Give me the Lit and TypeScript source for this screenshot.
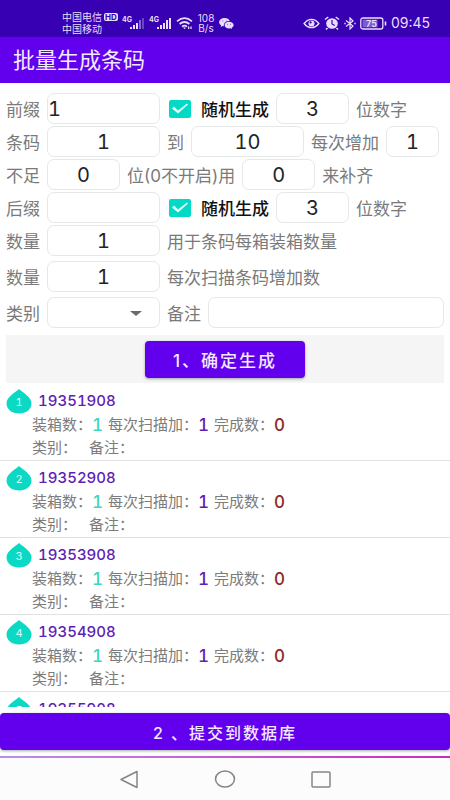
import { LitElement, html, css } from "lit";
import { customElement, property } from "lit/decorators.js";

const FONT = css`Inter, "Noto Sans CJK SC", sans-serif`;

@customElement("status-bar")
class StatusBar extends LitElement {
  static styles = css`
    :host { display: flex; justify-content: space-between; height: 37px; padding: 9px 20px 0 62px; box-sizing: border-box;
      background: #3700b3; color: #e9defa; font-family: ${FONT}; }
    .group { display: flex; align-items: center; gap: 4px; }
    .carrier { font-size: 10px; line-height: 12px; }
    .line { display: flex; align-items: center; gap: 2px; }
    .hd { font-size: 8px; line-height: 8px; font-weight: 700; color: #3700b3; background: #e9defa; border-radius: 2px; padding: 0 1px; }
    .rate { font-size: 10px; line-height: 10px; text-align: center; padding: 0 1px; }
    .time { font-size: 14px; line-height: 16px; }
    svg { display: block; }
  `;
  signal(weak: boolean) {
    return html`<svg width="23" height="18" viewBox="0 0 23 18" fill="#e9defa">
      <text x="0" y="8" font-size="7" font-weight="700">4G</text>
      <rect x="8" y="13" width="2" height="2" /><rect x="11" y="11" width="2" height="4" />
      <rect x="14" y="9" width="2" height="6" />
      <rect x="17" y="6" width="2" height="9" opacity=${weak ? 0.45 : 1} />
      <rect x="20" y="4" width="2" height="11" opacity=${weak ? 0.3 : 1} /></svg>`;
  }
  render() {
    return html`
      <div class="group">
        <div class="carrier">
          <div class="line">中国电信<span class="hd">HD</span></div>
          <div class="line">中国移动</div>
        </div>
        ${this.signal(true)}${this.signal(false)}
        <svg width="17" height="13" viewBox="0 0 17 13" fill="none" stroke="#e9defa" stroke-width="1.7">
          <path d="M1 4.300Q8.500-2 16 4.300M3.600 7Q8.500 3 13.400 7M6 9.600Q8.500 7.600 11 9.600" />
          <path d="M7 10.500h3l-1.500 1.800z" fill="#e9defa" stroke="none" />
          <path d="M12.600 12V9.500M15 9.500V12" stroke-width="1.300" />
        </svg>
        <div class="rate">108<br />B/s</div>
        <svg width="15" height="11" viewBox="0 0 16 12" fill="#e9defa">
          <path d="M6 0C2.700 0 0 2 0 4.500C0 6 .8 7.200 2.100 8L1.700 9.700L3.800 8.700L5.200 8.900C4.500 5.500 7.500 3 11.500 3.200C10.900 1.300 8.700 0 6 0Z" />
          <path d="M10.800 4C7.900 4 5.900 5.700 5.900 7.700C5.900 10 8.300 11.500 10.800 11.400L12.300 11.200L14 12L13.700 10.600C15 9.900 15.800 8.900 15.800 7.700C15.800 5.700 13.500 4 10.800 4Z" />
          <g fill="#3700b3"><circle cx="4" cy="3.200" r=".5" /><circle cx="7.600" cy="3.200" r=".5" /><circle cx="9.300" cy="6.800" r=".5" /><circle cx="12.500" cy="6.800" r=".5" /></g>
        </svg>
      </div>
      <div class="group">
        <svg width="17" height="11" viewBox="0 0 18 12" fill="none" stroke="#e9defa">
          <path d="M1 6Q4.500 1.500 9 1.500T17 6Q13.500 10.500 9 10.500T1 6Z" stroke-width="1.600" />
          <circle cx="9" cy="6" r="3.300" fill="#e9defa" stroke="none" /><circle cx="8" cy="4.800" r="1.200" fill="#3700b3" stroke="none" />
        </svg>
        <svg width="16" height="14" viewBox="0 0 16 14">
          <ellipse cx="8" cy="7.500" rx="5.800" ry="5.300" fill="#e9defa" />
          <path d="M1 3.500L4.300 1M15 3.500L11.700 1M3.500 12L2 13.500M12.500 12L14 13.500" stroke="#e9defa" stroke-width="1.500" />
          <path d="M8 4V8L10.800 9.500" fill="none" stroke="#3700b3" stroke-width="1.200" />
        </svg>
        <svg width="12" height="13" viewBox="0 0 12 13" fill="none" stroke="#e9defa" stroke-width="1.200">
          <path d="M2 3.500L9 9L6 12V1L9 4L2 9.500" /><path d="M.3 6.500h1.400M10.300 6.500h1.400" stroke-width="1.600" />
        </svg>
        <svg width="27" height="13" viewBox="0 0 27 13">
          <rect x=".8" y="1" width="22" height="11" rx="2" fill="none" stroke="#e9defa" stroke-width="1.300" />
          <rect x="2.500" y="2.600" width="15" height="7.800" fill="#7d5bd0" />
          <path d="M25.500 4.500v4" stroke="#e9defa" stroke-width="1.600" />
          <text x="11.500" y="10" font-size="9" font-weight="600" text-anchor="middle" fill="#e9defa">75</text>
        </svg>
        <div class="time">09:45</div>
      </div>`;
  }
}

@customElement("code-item")
class CodeItem extends LitElement {
  @property({ type: Number }) index = 1;
  @property() code = "";
  static styles = css`
    :host { display: block; padding: 5px 6px 0; height: 77px; box-sizing: border-box; border-bottom: 1px solid #e2e2e2;
      font-family: ${FONT}; color: #7c7c7c; font-size: 15px; font-variant-numeric: tabular-nums; }
    .head { display: flex; gap: 6px; height: 25px; }
    .drop { display: grid; width: 26px; height: 25px; }
    .drop > * { grid-area: 1 / 1; }
    .num { place-self: center; padding-top: 1px; font-size: 11px; line-height: 12px; color: #d8fff8; }
    .code { line-height: 23px; font-weight: 500; color: #5f1fb4; }
    .line { display: flex; align-items: center; padding-left: 26px; line-height: 22px; }
    .line b { font-size: 17px; font-weight: 500; margin-right: 5px; }
    .teal { color: #3dd6c3; }
    .purple { color: #5f1fb4; }
    .red { color: #8e2a20; }
    .second { gap: 12px; padding-top: 1px; }
  `;
  render() {
    return html`
      <div class="head">
        <div class="drop">
          <svg width="26" height="25" viewBox="0 0 26 25"><path fill="#0cd9c4" d="M13 0C15 2.500 25.500 7.500 25.500 14.200C25.500 20.300 20 24.500 13 24.500S.5 20.300.5 14.200C.5 7.500 11 2.500 13 0Z" /></svg>
          <span class="num">${this.index}</span>
        </div>
        <span class="code">${this.code}</span>
      </div>
      <div class="line">
        <span>装箱数：</span><b class="teal">1</b><span>每次扫描加：</span><b class="purple">1</b><span>完成数：</span><b class="red">0</b>
      </div>
      <div class="line second"><span>类别：</span><span>备注：</span></div>`;
  }
}

@customElement("app-root")
class AppRoot extends LitElement {
  static styles = css`
    :host { display: flex; flex-direction: column; height: 100vh; background: #fff; font-family: ${FONT}; color: #7a7a7a; overflow: hidden; }
    h1 { margin: 0; padding: 0 13px; font-size: 22px; line-height: 46px; font-weight: 400; color: #f2eafe; background: #6200ee; }
    form { padding: 10px 6px 0; font-size: 17px; }
    .row { display: flex; align-items: center; gap: 7px; margin-bottom: 2px; white-space: nowrap; }
    .loose { margin-bottom: 5px; }
    .field { box-sizing: border-box; height: 31px; margin: 0; padding: 0; border: 1px solid #e4e8e8; border-radius: 7px; background: #fff;
      font: 400 20px ${FONT}; font-variant-numeric: tabular-nums; color: #222; text-align: center; min-width: 0; }
    .left { text-align: left; }
    .wide { width: 113px; }
    .mid { width: 73px; }
    .tiny { width: 53px; }
    .grow { flex: 1; }
    .check { display: flex; align-items: center; gap: 10px; padding-left: 2px; color: #111; font-weight: 500; }
    .box { appearance: none; width: 22px; height: 18px; margin: 0; border-radius: 2px; border: 2px solid #757575; }
    .box:checked { border: 0; background: #03dac5; }
    .box:checked::before { content: ""; display: block; width: 22px; height: 18px; background: #e8fffc;
      clip-path: polygon(3px 9px, 5px 7px, 9px 11px, 18px 4px, 19px 5px, 9px 14px); }
    .pick { position: relative; display: flex; }
    .pick select { appearance: none; }
    .pick::after { content: ""; position: absolute; right: 18px; top: 14px; border: 6px solid transparent; border-top: 5px solid #6b6b6b; border-bottom: 0; pointer-events: none; }
    .panel { display: flex; justify-content: center; margin: 7px 0 1px; padding: 6px 0 5px; background: #f5f5f5; }
    button { border: 0; border-radius: 4px; height: 37px; background: #6200ee; color: #f2eafe; font: 500 17px ${FONT}; letter-spacing: 2px;
      box-shadow: 0 1px 3px rgba(0, 0, 0, .35); }
    .generate { width: 160px; padding: 0; }
    .list { flex: 1; min-height: 0; overflow-y: auto; scrollbar-width: none; }
    .submit { margin-top: 6px; font-size: 16px; flex: none; }
    .glow { height: 2px; margin-top: 6px; flex: none; background: linear-gradient(90deg, #b98fe6, #c95bd6 50%, #c92bc4); }
    nav { display: flex; justify-content: center; gap: 70px; height: 42px; flex: none; align-items: center; background: #fcfcfc; }
    nav button { all: unset; display: flex; width: 26px; justify-content: center; }
  `;
  random(name: string) {
    return html`<label class="check"><input class="box" type="checkbox" name=${name} checked />随机生成</label>`;
  }
  render() {
    const codes = ["19351908", "19352908", "19353908", "19354908", "19355908"];
    return html`
      <status-bar></status-bar>
      <h1>批量生成条码</h1>
      <form>
        <div class="row"><label for="prefix">前缀</label><input id="prefix" class="field wide left" value="1" />
          ${this.random("random-prefix")}<input id="prefix-digits" class="field mid" value="3" /><label for="prefix-digits">位数字</label></div>
        <div class="row"><label for="from">条码</label><input id="from" class="field wide" value="1" />
          <label for="to">到</label><input id="to" class="field wide" value="10" />
          <label for="step">每次增加</label><input id="step" class="field tiny" value="1" /></div>
        <div class="row"><label for="len">不足</label><input id="len" class="field mid" value="0" />
          <label for="pad">位(0不开启)用</label><input id="pad" class="field mid" value="0" /><span>来补齐</span></div>
        <div class="row"><label for="suffix">后缀</label><input id="suffix" class="field wide left" />
          ${this.random("random-suffix")}<input id="suffix-digits" class="field mid" value="3" /><label for="suffix-digits">位数字</label></div>
        <div class="row loose"><label for="qty">数量</label><input id="qty" class="field wide" value="1" /><span>用于条码每箱装箱数量</span></div>
        <div class="row loose"><label for="inc">数量</label><input id="inc" class="field wide" value="1" /><span>每次扫描条码增加数</span></div>
        <div class="row"><label for="kind">类别</label><span class="pick"><select id="kind" class="field wide"><option></option></select></span>
          <label for="note">备注</label><input id="note" class="field grow left" /></div>
        <div class="panel"><button type="button" class="generate">1、确定生成</button></div>
      </form>
      <div class="list">${codes.map((c, i) => html`<code-item .index=${i + 1} .code=${c}></code-item>`)}</div>
      <button type="button" class="submit">2 、提交到数据库</button>
      <div class="glow"></div>
      <nav>
        <button aria-label="返回"><svg width="20" height="19" viewBox="0 0 20 19"><path d="M18 1.500V17.500L2 9.500Z" fill="none" stroke="#858585" stroke-width="1.500" stroke-linejoin="round" /></svg></button>
        <button aria-label="主页"><svg width="22" height="18" viewBox="0 0 22 18"><ellipse cx="11" cy="9" rx="9.500" ry="8" fill="none" stroke="#858585" stroke-width="1.500" /></svg></button>
        <button aria-label="最近"><svg width="20" height="17" viewBox="0 0 20 17"><rect x="1" y="1" width="18" height="15" rx="1" fill="none" stroke="#858585" stroke-width="1.500" /></svg></button>
      </nav>`;
  }
}
